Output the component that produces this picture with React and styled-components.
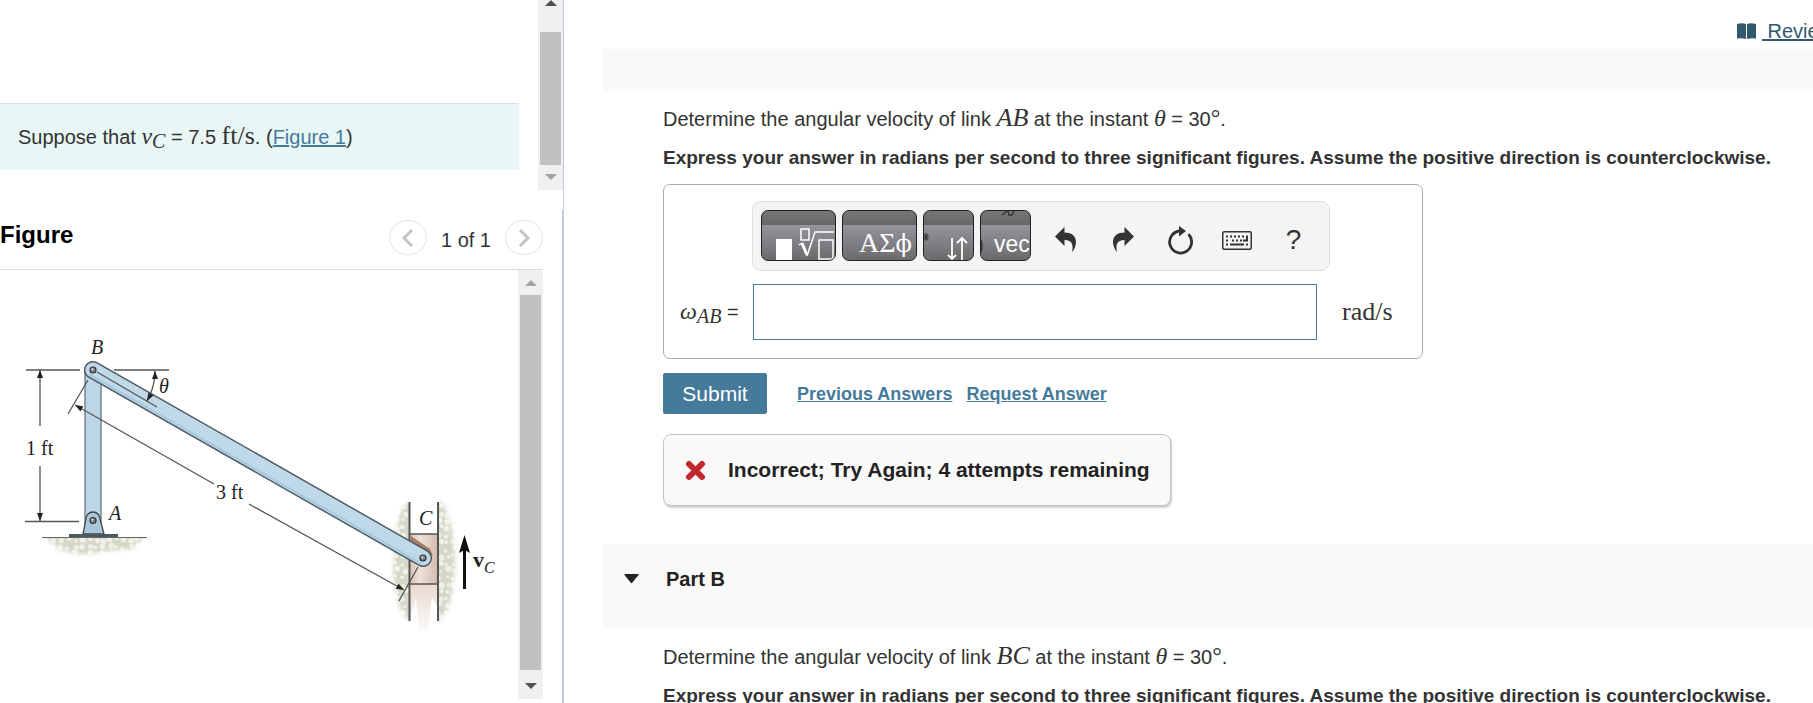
import React from "react";
import styled, { createGlobalStyle } from "styled-components";

const GlobalStyle = createGlobalStyle`
  * {
    box-sizing: border-box;
  }
  body {
    margin: 0;
    background: #fff;
    color: #333;
    font-family: "Liberation Sans", Arial, sans-serif;
    font-size: 20px;
    line-height: 24px;
    overflow: hidden;
  }
  button {
    font-family: inherit;
    cursor: pointer;
  }
`;

const Page = styled.div`
  display: flex;
  height: 100vh;
  overflow: hidden;
`;

/* left column */

const LeftPane = styled.aside`
  flex: 0 1 564px;
  display: flex;
  flex-direction: column;
  min-width: 0;
`;

const ProblemPanel = styled.section`
  display: flex;
  align-items: flex-start;
  flex: 0 0 210px;
  border-right: 1px solid #c0ccdd;
`;

const ProblemBody = styled.div`
  flex: 1;
  padding: 103px 19px 20px 0;
`;

const Callout = styled.p`
  margin: 0;
  padding: 21px 18px;
  background: #e9f6f6;
  border-top: 1px solid #d8dedf;
`;

const FigurePanel = styled.section`
  flex: 1;
  display: flex;
  flex-direction: column;
  min-height: 0;
  padding: 0 19px 4px 0;
  border-right: 2px solid #c0ccdd;
`;

const FigureHeader = styled.header`
  display: flex;
  justify-content: space-between;
  align-items: flex-start;
  height: 60px;
  padding-top: 10px;
  border-bottom: 1px solid #ddd;
`;

const FigureTitle = styled.h2`
  margin: 0;
  padding-top: 3px;
  color: #000;
  font-size: 24px;
  line-height: 24px;
`;

const Pager = styled.nav`
  display: flex;
  align-items: center;
  gap: 14px;
`;

const PagerText = styled.span`
  padding-top: 5px;
`;

const PagerButton = styled.button`
  display: flex;
  align-items: center;
  justify-content: center;
  width: 38px;
  height: 35px;
  padding: 0;
  background: #fff;
  border: 1px solid #e6e6e6;
  border-radius: 50%;
`;

const FigureScroller = styled.div`
  flex: 1;
  display: flex;
  min-height: 0;
`;

const FigureView = styled.div`
  flex: 1;
  min-width: 0;
  overflow: hidden;

  svg {
    display: block;
  }
`;

const Track = styled.div`
  display: flex;
  flex-direction: column;
  align-items: center;
  width: 25px;
  height: ${({ $height }) => $height};
  padding: ${({ $pad }) => $pad};
  background: #f0f0f0;
`;

const Thumb = styled.div`
  flex: 1;
  width: 21px;
  margin: ${({ $margin }) => $margin};
  background: #c1c1c1;
`;

const Arrow = styled.span`
  width: 0;
  height: 0;
  border: 6px solid transparent;
  border-width: ${({ $up }) => ($up ? "0 6px 6px" : "6px 6px 0")};
  border-${({ $up }) => ($up ? "bottom" : "top")}-color: ${({ $dim }) =>
    $dim ? "#a3a3a3" : "#505050"};
`;

/* right column */

const RightPane = styled.main`
  flex: 1;
  min-width: 0;
  padding-left: 39px;
  overflow: hidden;
`;

const TopBar = styled.div`
  display: flex;
  justify-content: flex-end;
  height: 49px;
  padding-top: 19px;
`;

const ReviewLink = styled.a`
  display: flex;
  gap: 6px;
  width: 76px;
  color: #30596e;
  white-space: pre;
  text-decoration: none;

  svg {
    flex: none;
    margin-top: 4px;
  }

  span {
    text-decoration: underline;
  }
`;

const PartBand = styled.div`
  height: 42px;
  background: #f9f9f9;
`;

const PartHeader = styled.h2`
  display: flex;
  align-items: flex-start;
  gap: 27px;
  height: 85px;
  margin: 38px 0 0;
  padding: 23px 21px;
  background: #f9f9f9;
  color: #222;
  font-size: 20px;

  svg {
    margin-top: 7px;
  }
`;

const PartBody = styled.div`
  padding: 16px 0 0 60px;
`;

const Prompt = styled.p`
  margin: 0 0 15px;
`;

const Instructions = styled.p`
  margin: 0 0 14px;
  font-size: 19px;
  font-weight: bold;
`;

const MathText = styled.span`
  font-family: "Liberation Serif", "Times New Roman", serif;
  font-size: ${({ $size }) => $size || 24}px;
  font-style: ${({ $upright }) => ($upright ? "normal" : "italic")};
  line-height: 20px;

  sub {
    font-size: 20px;
    line-height: 0;
    vertical-align: -4px;
  }
`;

const AnswerBox = styled.form`
  display: grid;
  grid-template-columns: 60px minmax(0, 578px) auto;
  grid-template-rows: 70px 56px;
  gap: 13px 12px;
  align-items: center;
  max-width: 760px;
  padding: 16px 16px 18px;
  border: 1px solid #aaa;
  border-radius: 7px;
`;

const Toolbar = styled.div`
  grid-column: 2;
  display: flex;
  align-items: center;
  gap: 6px;
  height: 70px;
  padding: 0 8px 2px;
  background: #f4f4f4;
  border: 1px solid #ddd;
  border-radius: 9px;
`;

const PaletteButton = styled.button`
  flex: none;
  width: ${({ $wide }) => ($wide ? 75 : 51)}px;
  height: 51px;
  padding: 0;
  overflow: hidden;
  border: 1px solid #222;
  border-radius: 7px;
  background: linear-gradient(#777 0, #666 14px, #96949c 14px, #6b6b6d 100%);
  color: #fff;

  svg {
    display: block;
  }
`;

const ToolIcons = styled.div`
  display: flex;
`;

const IconButton = styled.button`
  display: flex;
  align-items: center;
  justify-content: center;
  width: 57px;
  height: 50px;
  padding: 10px 0 0;
  border: 0;
  background: none;
  color: #333;
  font-size: 28px;
`;

const AnswerLabel = styled.label`
  grid-column: 1;
  white-space: nowrap;
`;

const AnswerInput = styled.input`
  width: calc(100% - 14px);
  height: 56px;
  margin-left: 1px;
  padding: 0 12px;
  border: 1px solid #457a9b;
  font-size: 20px;
`;

const Actions = styled.div`
  display: flex;
  align-items: center;
  gap: 14px;
  padding: 14px 0 20px;
`;

const SubmitButton = styled.button`
  width: 104px;
  height: 41px;
  margin-right: 16px;
  padding: 0;
  border: 0;
  border-radius: 2px;
  background: #457a9b;
  color: #fff;
  font-size: 21px;
`;

const ActionLink = styled.a`
  color: #457a9b;
  font-size: ${({ $size }) => $size || 18}px;
  font-weight: ${({ $plain }) => ($plain ? "normal" : "bold")};
  white-space: nowrap;
`;

const Feedback = styled.div`
  display: flex;
  align-items: center;
  gap: 22px;
  width: fit-content;
  height: 72px;
  padding: 0 20px 0 21px;
  border: 1px solid #c4c4c4;
  border-radius: 8px;
  background: #f9f9f9;
  box-shadow: 1px 2px 2px rgba(0, 0, 0, 0.2);
  color: #222;
  font-size: 21px;
  font-weight: bold;
`;

const ScrollBar = ({ height, pad, thumbMargin, dimUp, dimDown }) => (
  <Track $height={height} $pad={pad} aria-hidden="true">
    <Arrow $up $dim={dimUp} />
    <Thumb $margin={thumbMargin} />
    <Arrow $dim={dimDown} />
  </Track>
);

const Chevron = ({ left }) => (
  <svg width="12" height="18" viewBox="0 0 12 18" fill="none" stroke="#c4c4c4" strokeWidth="3">
    <path d={left ? "M10 1 L2 9 L10 17" : "M2 1 L10 9 L2 17"} />
  </svg>
);

// stones: packed irregular circles covering a rectangle
const stones = (x0, y0, x1, y1, step) => {
  const list = [];
  let seed = 7;
  const rand = () => {
    seed = (seed * 16807) % 2147483647;
    return seed / 2147483647;
  };
  for (let y = y0; y < y1; y += step) {
    for (let x = x0; x < x1; x += step) {
      list.push({
        x: x + rand() * 4,
        y: y + rand() * 4,
        r: step * (0.26 + rand() * 0.24),
      });
    }
  }
  return list;
};

const Gravel = ({ box, mask }) => (
  <g mask={`url(#${mask})`}>
    <rect x={box[0]} y={box[1]} width={box[2] - box[0]} height={box[3] - box[1]} fill="#d6d6c9" />
    {stones(...box, 7).map((s, i) => (
      <circle key={i} cx={s.x} cy={s.y} r={s.r} fill="#f1f1e8" stroke="#cfcfc1" strokeWidth="0.5" />
    ))}
  </g>
);

const Pin = ({ x, y }) => (
  <g>
    <circle cx={x} cy={y} r="3" fill="#7d858a" stroke="#333" strokeWidth="1.2" />
    <circle cx={x - 0.8} cy={y - 0.8} r="1" fill="#dfe4e7" />
  </g>
);

const LinkageFigure = () => (
  <svg width="518" height="430" viewBox="0 270 518 430" role="img" aria-label="Linkage ABC">
    <defs>
      <filter id="soft">
        <feGaussianBlur stdDeviation="2" />
      </filter>
      <mask id="ground" maskUnits="userSpaceOnUse" x="30" y="538" width="130" height="30">
        <path d="M42 534 H147 L132 549 Q112 549 94 554 Q70 556 56 547 Z" fill="#fff" filter="url(#soft)" />
      </mask>
      <mask id="wallLeft" maskUnits="userSpaceOnUse" x="380" y="495" width="29" height="135">
        <ellipse cx="412" cy="561" rx="19" ry="60" fill="#fff" filter="url(#soft)" />
      </mask>
      <mask id="wallRight" maskUnits="userSpaceOnUse" x="438" y="495" width="29" height="135">
        <ellipse cx="436" cy="561" rx="19" ry="60" fill="#fff" filter="url(#soft)" />
      </mask>
      <linearGradient id="block">
        <stop offset="0" stopColor="#d8c3b6" />
        <stop offset="0.35" stopColor="#eee2da" />
        <stop offset="1" stopColor="#d1bbae" />
      </linearGradient>
      <linearGradient id="streak" x2="0" y2="1">
        <stop offset="0" stopColor="#e8dad1" />
        <stop offset="1" stopColor="#fbf8f6" />
      </linearGradient>
      <marker id="tip" viewBox="0 0 8 6" refX="8" refY="3" markerWidth="8" markerHeight="6" markerUnits="userSpaceOnUse" orient="auto-start-reverse">
        <path d="M0 0 L8 3 L0 6 Z" fill="#222" />
      </marker>
    </defs>

    <Gravel box={[38, 538, 152, 560]} mask="ground" />
    <Gravel box={[388, 498, 409, 626]} mask="wallLeft" />
    <Gravel box={[438, 498, 460, 626]} mask="wallRight" />

    <path d="M411 584 H437 V606 L432 598 L428 630 H419 L416 598 L412 612 L410 628 Z" fill="url(#streak)" />
    <rect x="410" y="534" width="28" height="50" fill="url(#block)" />
    <path d="M411 536 L430 549 L433 556 L411 546 Z" fill="#a57a63" />
    <g stroke="#555" strokeWidth="2">
      <path d="M409.5 502 V621 M438 502 V621" />
      <path d="M410 534 H438 M410 584 H438" strokeWidth="1.6" />
    </g>

    <rect x="85" y="370" width="16" height="160" fill="#bcd6e6" stroke="#6b7880" strokeWidth="1.3" />
    <path d="M83 534 L86 519 A7 7 0 0 1 100 519 L104 534 Z" fill="#a9c8dc" stroke="#444" strokeWidth="1.3" />
    <rect x="69" y="534" width="49" height="4" fill="#4d5962" />
    <path d="M42 537.5 H147" stroke="#666" strokeWidth="1.2" />

    <path d="M93 370 L423 558" stroke="#4b565e" strokeWidth="18" strokeLinecap="round" />
    <path d="M93 370 L423 558" stroke="#c0d9e8" strokeWidth="15.2" strokeLinecap="round" />
    <path d="M90 375 L420 563" stroke="#a8c9de" strokeWidth="2.5" strokeLinecap="round" />
    <Pin x={93} y={370} />
    <Pin x={93} y={520.5} />
    <Pin x={423} y={558} />

    <g fill="none" stroke="#555" strokeWidth="1.3">
      <path d="M26 370 H80 M114 370 H169 M25 521.5 H79" />
      <path d="M88 380 L68 414 M418 567 L399 601 M97 372 L157 407" />
      <path d="M40 426 V370" markerEnd="url(#tip)" />
      <path d="M40 466 V521" markerEnd="url(#tip)" />
      <path d="M155 371 Q155 387 147 401" markerStart="url(#tip)" markerEnd="url(#tip)" />
      <path d="M214 484 L75 405" markerEnd="url(#tip)" />
      <path d="M249 504 L404 590" markerEnd="url(#tip)" />
    </g>

    <path d="M464.5 589 V548" stroke="#111" strokeWidth="3" />
    <path d="M464.5 535 L470 553 L464.5 550 L459 553 Z" fill="#111" />

    <g fontFamily="'Liberation Serif', serif" fontSize="20" fill="#222">
      <text x="26" y="455">1 ft</text>
      <text x="216" y="499">3 ft</text>
      <g fontStyle="italic">
        <text x="91" y="354">B</text>
        <text x="109" y="520">A</text>
        <text x="419" y="525">C</text>
        <text x="159" y="393">θ</text>
        <text x="484" y="573" fontSize="16">C</text>
      </g>
      <text x="473" y="567" fontSize="22" fontWeight="bold">v</text>
    </g>
  </svg>
);

const RootIcon = () => (
  <svg width="73" height="49" viewBox="0 0 73 49" fill="none" stroke="#fff">
    <rect x="14" y="28" width="16" height="21" fill="#fff" stroke="none" />
    <rect x="39" y="18" width="8" height="11" strokeWidth="1.5" />
    <path d="M37 34 L40 32" strokeWidth="1.5" />
    <path d="M40 32 L45 44" strokeWidth="3" />
    <path d="M45 45 L53 21 H72" strokeWidth="1.5" />
    <rect x="57" y="29" width="14" height="19" strokeWidth="1.5" />
  </svg>
);

const GreekIcon = () => (
  <svg width="73" height="49" viewBox="0 0 73 49">
    <text x="16" y="41" fill="#fff" fontFamily="'Liberation Serif', serif" fontSize="28">
      ΑΣ
      <tspan fontFamily="'DejaVu Serif', serif" fontSize="24">
        ϕ
      </tspan>
    </text>
  </svg>
);

const ArrowsIcon = () => (
  <svg width="49" height="49" viewBox="0 0 49 49" fill="none">
    <path d="M0 23 L4 29 M4 23 L0 29 M2 22 V30 M-1 26 H5" stroke="#333" />
    <path d="M28 27 V48 M24 44 L28 48 L32 44 M38 49 V27 M33 32 L38 27 L43 32" stroke="#fff" strokeWidth="1.8" />
  </svg>
);

const VecIcon = () => (
  <svg width="49" height="49" viewBox="0 0 49 49" fill="none">
    <path d="M21 4 L26 0 M27 0 L28 4 L31 4 L33 0 M0 29 Q2 35 0 41" stroke="#333" strokeWidth="1.5" />
    <text x="13" y="41" fill="#fff" fontFamily="'Liberation Sans', sans-serif" fontSize="23">
      vec
    </text>
  </svg>
);

const UndoIcon = ({ flip }) => (
  <svg width="22" height="26" viewBox="0 0 22 26" fill="currentColor">
    <path
      transform={flip ? "translate(22 0) scale(-1 1)" : undefined}
      d="M0 9.500 L9.500 0 V5.500 C16 5.500 21 8.500 21 15 C21 19 19 23 17 25 C18.500 18 17.500 13 9.500 13 V19 Z"
    />
  </svg>
);

const ResetIcon = () => (
  <svg width="26" height="30" viewBox="0 0 26 30" fill="none">
    <path d="M13 6 A11 11 0 1 0 21.500 9.300" stroke="currentColor" strokeWidth="2.800" />
    <path d="M12 1 L19 6 L12 11.500 Z" fill="currentColor" />
  </svg>
);

const KeyboardIcon = () => (
  <svg width="30" height="19" viewBox="0 0 30 19" fill="none" stroke="currentColor">
    <rect x="0.750" y="0.750" width="28.500" height="17.500" rx="1.500" strokeWidth="1.500" />
    <path d="M4 5.500 H23" strokeWidth="2" strokeDasharray="2 2" />
    <path d="M4 9.500 H8 M10 9.500 H22" strokeWidth="2" strokeDasharray="2 2" />
    <path d="M25 4.500 V9.500 H21 M4 13.500 H6 M8 13.500 H22 M24 13.500 H26" strokeWidth="2" />
  </svg>
);

const BookIcon = () => (
  <svg width="19" height="16" viewBox="0 0 19 16" fill="#30596e">
    <path d="M0 1 Q5 -0.500 9 1 V16 Q5 15 0 15.500 Z" />
    <path d="M10 1 Q14 -0.500 19 1 V15.500 Q14 15 10 16 Z" />
  </svg>
);

const CrossIcon = () => (
  <svg width="21" height="21" viewBox="0 0 21 21" stroke="#c1272d" strokeWidth="6" strokeLinecap="round">
    <path d="M4 4 L17 17 M17 4 L4 17" />
  </svg>
);

const Question = ({ link }) => (
  <>
    <Prompt>
      Determine the angular velocity of link <MathText $size={26}>{link}</MathText> at the instant{" "}
      <MathText>θ</MathText> = 30
      <MathText $upright>°</MathText>.
    </Prompt>
    <Instructions>
      Express your answer in radians per second to three significant figures. Assume the positive
      direction is counterclockwise.
    </Instructions>
  </>
);

const App = () => {
  return (
    <>
      <GlobalStyle />
      <Page>
        <LeftPane>
          <ProblemPanel>
            <ProblemBody>
              <Callout>
                Suppose that{" "}
                <MathText>
                  v<sub>C</sub>
                </MathText>{" "}
                = 7.5{" "}
                <MathText $upright $size={26}>
                  ft/s
                </MathText>
                . (
                <ActionLink href="#figure" $plain $size={20}>
                  Figure 1
                </ActionLink>
                )
              </Callout>
            </ProblemBody>
            <ScrollBar height="190px" pad="0 0 10px" thumbMargin="26px 0 9px" dimDown />
          </ProblemPanel>

          <FigurePanel id="figure">
            <FigureHeader>
              <FigureTitle>Figure</FigureTitle>
              <Pager aria-label="Figures">
                <PagerButton type="button" aria-label="Previous figure">
                  <Chevron left />
                </PagerButton>
                <PagerText>1 of 1</PagerText>
                <PagerButton type="button" aria-label="Next figure">
                  <Chevron />
                </PagerButton>
              </Pager>
            </FigureHeader>
            <FigureScroller>
              <FigureView>
                <LinkageFigure />
              </FigureView>
              <ScrollBar height="100%" pad="10px 0" thumbMargin="9px 0 13px" dimUp />
            </FigureScroller>
          </FigurePanel>
        </LeftPane>

        <RightPane>
          <TopBar>
            <ReviewLink href="#review">
              <BookIcon />
              <span> Review</span>
            </ReviewLink>
          </TopBar>
          <PartBand />
          <PartBody>
            <Question link="AB" />
            <AnswerBox id="answer">
              <Toolbar role="toolbar">
                <PaletteButton type="button" $wide aria-label="Templates">
                  <RootIcon />
                </PaletteButton>
                <PaletteButton type="button" $wide aria-label="Symbols">
                  <GreekIcon />
                </PaletteButton>
                <PaletteButton type="button" aria-label="Arrows">
                  <ArrowsIcon />
                </PaletteButton>
                <PaletteButton type="button" aria-label="Vectors">
                  <VecIcon />
                </PaletteButton>
                <ToolIcons>
                  <IconButton type="button" aria-label="Undo">
                    <UndoIcon />
                  </IconButton>
                  <IconButton type="button" aria-label="Redo">
                    <UndoIcon flip />
                  </IconButton>
                  <IconButton type="button" aria-label="Reset">
                    <ResetIcon />
                  </IconButton>
                  <IconButton type="button" aria-label="Keyboard shortcuts">
                    <KeyboardIcon />
                  </IconButton>
                  <IconButton type="button" aria-label="Help">
                    ?
                  </IconButton>
                </ToolIcons>
              </Toolbar>
              <AnswerLabel htmlFor="omega">
                <MathText>
                  ω<sub>AB</sub>
                </MathText>{" "}
                =
              </AnswerLabel>
              <AnswerInput id="omega" type="text" />
              <MathText $upright $size={26}>
                rad/s
              </MathText>
            </AnswerBox>
            <Actions>
              <SubmitButton type="submit" form="answer">
                Submit
              </SubmitButton>
              <ActionLink href="#previous">Previous Answers</ActionLink>
              <ActionLink href="#request">Request Answer</ActionLink>
            </Actions>
            <Feedback role="status">
              <CrossIcon />
              Incorrect; Try Again; 4 attempts remaining
            </Feedback>
          </PartBody>
          <PartHeader>
            <svg width="15" height="10" viewBox="0 0 15 10" fill="#222">
              <path d="M1 0 H14 Q15 0 14.500 1 L8 9 Q7.500 9.500 7 9 L0.500 1 Q0 0 1 0 Z" />
            </svg>
            Part B
          </PartHeader>
          <PartBody>
            <Question link="BC" />
          </PartBody>
        </RightPane>
      </Page>
    </>
  );
};

export default App;
